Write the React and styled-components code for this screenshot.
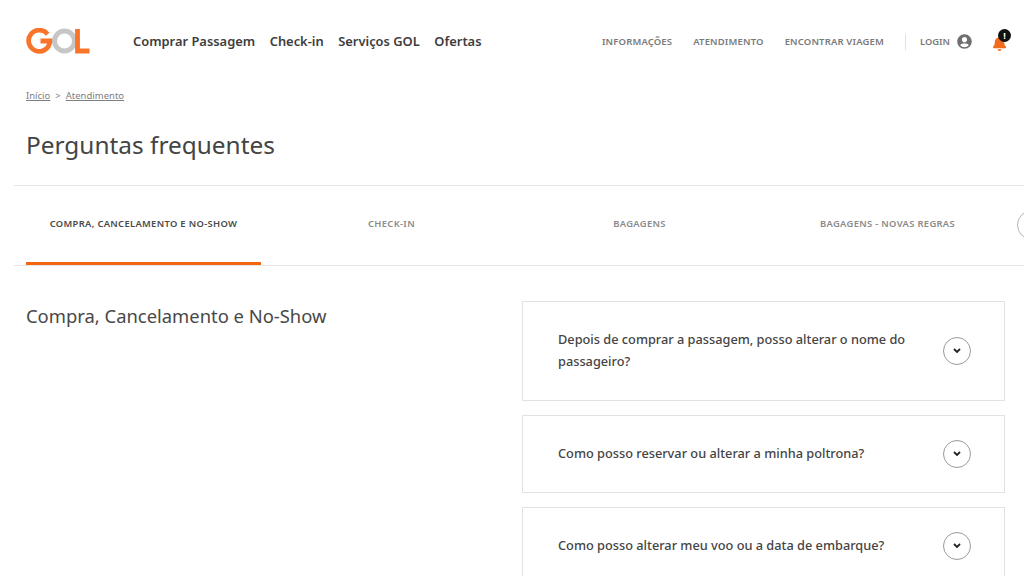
import * as React from "react";
import styled, { createGlobalStyle } from "styled-components";
import { FaUserCircle, FaBell } from "react-icons/fa";

const GlobalStyle = createGlobalStyle`
  html, body {
    margin: 0;
    padding: 0;
    background: #fff;
    overflow: hidden;
  }
  body {
    font-family: "Noto Sans", "Open Sans", sans-serif;
  }
`;

const mainLinks = ["Comprar Passagem", "Check-in", "Serviços GOL", "Ofertas"];
const topLinks = ["INFORMAÇÕES", "ATENDIMENTO", "ENCONTRAR VIAGEM"];
const tabs = ["COMPRA, CANCELAMENTO E NO-SHOW", "CHECK-IN", "BAGAGENS", "BAGAGENS - NOVAS REGRAS"];
const questions = [
  { text: "Depois de comprar a passagem, posso alterar o nome do passageiro?", height: 100 },
  { text: "Como posso reservar ou alterar a minha poltrona?", height: 78 },
  { text: "Como posso alterar meu voo ou a data de embarque?", height: 78 },
];

function Logo() {
  return (
    <LogoSvg viewBox="0 0 64 26" aria-label="GOL">
      <circle cx="38.5" cy="13" r="10" fill="none" stroke="#c6c6c6" strokeWidth="5" />
      <path d="M21.6 6.2 A10.6 10.6 0 1 0 23.8 14 V13 H14.5" fill="none" stroke="#f7742a" strokeWidth="4.8" />
      <path d="M51.5 1 V23 H63.5" fill="none" stroke="#f7742a" strokeWidth="4.8" />
    </LogoSvg>
  );
}

function Chevron() {
  return (
    <svg width="8" height="6" viewBox="0 0 8 6">
      <path d="M1 1 L4 4 L7 1" fill="none" stroke="#222" strokeWidth="1.8" />
    </svg>
  );
}

export default function App() {
  return (
    <Page>
      <GlobalStyle />
      <Header>
        <Logo />
        <MainNav>
          {mainLinks.map((l) => (
            <MainLink key={l}>{l}</MainLink>
          ))}
        </MainNav>
        <TopNav>
          {topLinks.map((l) => (
            <TopLink key={l}>{l}</TopLink>
          ))}
          <Separator />
          <Login>
            LOGIN
            <FaUserCircle size={15} color="#6f6f6f" />
          </Login>
          <BellWrap>
            <FaBell size={15} color="#f26a1b" />
            <Badge>!</Badge>
          </BellWrap>
        </TopNav>
      </Header>

      <Breadcrumb>
        <CrumbLink>Início</CrumbLink>
        <span>&gt;</span>
        <CrumbLink>Atendimento</CrumbLink>
      </Breadcrumb>

      <Title>Perguntas frequentes</Title>

      <TabBar>
        {tabs.map((t, i) => (
          <Tab key={t} $active={i === 0}>
            {t}
          </Tab>
        ))}
        <TabArrow />
      </TabBar>

      <Content>
        <SectionTitle>Compra, Cancelamento e No-Show</SectionTitle>
        <Questions>
          {questions.map((q) => (
            <Card key={q.text} $height={q.height}>
              <Question>{q.text}</Question>
              <RoundButton>
                <Chevron />
              </RoundButton>
            </Card>
          ))}
        </Questions>
      </Content>
    </Page>
  );
}

const Page = styled.div`
  width: 1024px;
  height: 576px;
  overflow: hidden;
  color: #444;
`;

const Header = styled.header`
  display: flex;
  align-items: center;
  height: 82px;
  padding: 0 17px 0 26px;
`;

const LogoSvg = styled.svg`
  width: 64px;
  height: 26px;
  flex: none;
`;

const MainNav = styled.nav`
  display: flex;
  gap: 14.5px;
  margin-left: 43px;
`;

const MainLink = styled.a`
  font-size: 12.9px;
  font-weight: 600;
  color: #3d3d3d;
  white-space: nowrap;
`;

const TopNav = styled.nav`
  display: flex;
  align-items: center;
  margin-left: auto;
`;

const TopLink = styled.a`
  font-size: 9.5px;
  font-weight: 600;
  letter-spacing: 0.15px;
  color: #7a7a7a;
  white-space: nowrap;
  margin-left: 21px;
`;

const Separator = styled.span`
  width: 1px;
  height: 16px;
  background: #e2e2e2;
  margin: 2px 14px 0 21px;
`;

const Login = styled.span`
  display: flex;
  align-items: center;
  gap: 7px;
  font-size: 9.4px;
  font-weight: 600;
  color: #7a7a7a;
`;

const BellWrap = styled.span`
  position: relative;
  display: flex;
  margin-left: 20px;
  top: 2px;
`;

const Badge = styled.span`
  position: absolute;
  top: -7px;
  right: -4px;
  width: 13px;
  height: 13px;
  border-radius: 50%;
  background: #111;
  color: #fff;
  font-size: 9px;
  font-weight: 700;
  line-height: 13px;
  text-align: center;
`;

const Breadcrumb = styled.div`
  display: flex;
  gap: 5px;
  padding-left: 26px;
  margin-top: 7px;
  font-size: 9.5px;
  line-height: 14px;
  color: #808080;
`;

const CrumbLink = styled.a`
  text-decoration: underline;
`;

const Title = styled.h1`
  margin: 25px 0 0 26px;
  font-size: 24.4px;
  font-weight: 400;
  line-height: 34px;
  color: #444;
`;

const TabBar = styled.div`
  position: relative;
  display: flex;
  align-items: stretch;
  height: 79px;
  width: 998px;
  margin: 23px 0 0 14px;
  padding: 0 0 0 12px;
  box-sizing: content-box;
  border-top: 1px solid #e6e6e6;
  border-bottom: 1px solid #e6e6e6;
`;

const Tab = styled.div`
  flex: none;
  width: 235px;
  margin-right: 13px;
  display: flex;
  align-items: center;
  justify-content: center;
  padding: 1px 0 3px;
  box-sizing: border-box;
  font-size: 9.4px;
  font-weight: 600;
  letter-spacing: 0.33px;
  white-space: nowrap;
  color: ${(p) => (p.$active ? "#4a4a4a" : "#8a8a8a")};
  border-bottom: 3px solid ${(p) => (p.$active ? "#f4650f" : "transparent")};
`;

const TabArrow = styled.span`
  position: absolute;
  top: 24px;
  left: 1003px;
  width: 28px;
  height: 28px;
  border: 1px solid #b5b5b5;
  border-radius: 50%;
  background: #fff;
`;

const Content = styled.main`
  display: flex;
  padding: 35px 19px 0 26px;
`;

const SectionTitle = styled.h2`
  width: 496px;
  flex: none;
  margin: 0;
  font-size: 18.4px;
  font-weight: 400;
  line-height: 30px;
  color: #484848;
`;

const Questions = styled.div`
  flex: 1;
  display: flex;
  flex-direction: column;
  gap: 14px;
`;

const Card = styled.div`
  flex: none;
  display: flex;
  align-items: center;
  justify-content: space-between;
  box-sizing: border-box;
  height: ${(p) => p.$height}px;
  padding: 0 33px 0 35px;
  border: 1px solid #e2e2e2;
`;

const Question = styled.p`
  width: 356px;
  margin: 0 0 2px;
  font-size: 12.75px;
  font-weight: 500;
  line-height: 22px;
  color: #444;
`;

const RoundButton = styled.span`
  flex: none;
  display: flex;
  align-items: center;
  justify-content: center;
  box-sizing: border-box;
  width: 28px;
  height: 28px;
  border: 1px solid #9a9a9a;
  border-radius: 50%;
`;
